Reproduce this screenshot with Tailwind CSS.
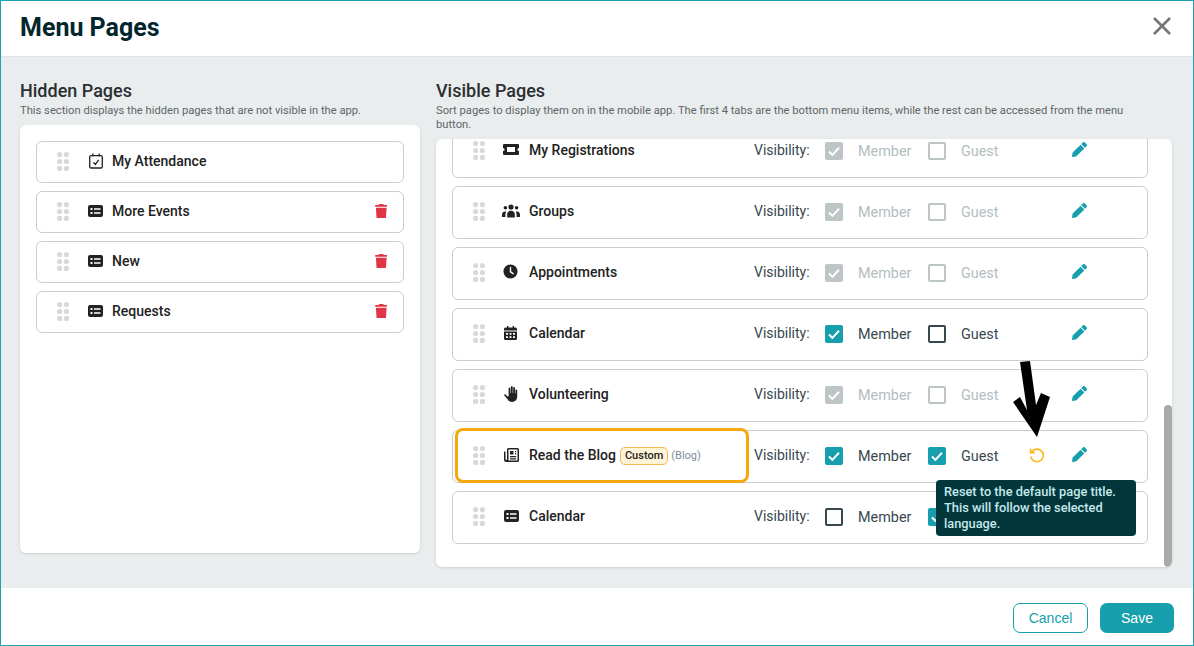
<!DOCTYPE html>
<html lang="en">
<head>
<meta charset="UTF-8">
<title>Menu Pages</title>
<script src="https://cdn.jsdelivr.net/npm/@tailwindcss/browser@4"></script>
</head>
<body class="bg-white font-['Roboto',sans-serif]">
<svg class="hidden">
  <symbol id="grip" viewBox="0 0 12 19"><g fill="#d9d9d9"><circle cx="2.6" cy="2.6" r="2.6"/><circle cx="9.4" cy="2.6" r="2.6"/><circle cx="2.6" cy="9.5" r="2.6"/><circle cx="9.4" cy="9.5" r="2.6"/><circle cx="2.6" cy="16.4" r="2.6"/><circle cx="9.4" cy="16.4" r="2.6"/></g></symbol>
  <symbol id="card" viewBox="0 0 15 12"><path fill="#222" fill-rule="evenodd" d="M2 0h11a2 2 0 0 1 2 2v8a2 2 0 0 1-2 2H2a2 2 0 0 1-2-2V2a2 2 0 0 1 2-2zM2.5 3v2h2V3zM2.5 7v2h2V7zM6 3.2v1.6h6.5V3.2zM6 7.2v1.6h6.5V7.2z"/></symbol>
  <symbol id="trash" viewBox="0 0 448 512"><path fill="#e03546" d="M135.2 17.7L128 32H32C14.3 32 0 46.3 0 64S14.3 96 32 96H416c17.7 0 32-14.3 32-32s-14.3-32-32-32H320l-7.2-14.3C307.4 6.8 296.3 0 284.2 0H163.8c-12.1 0-23.2 6.8-28.6 17.7zM416 128H32L53.2 467c1.6 25.3 22.6 45 47.9 45H346.9c25.3 0 46.3-19.7 47.9-45L416 128z"/></symbol>
  <symbol id="pencil" viewBox="0 0 512 512"><path fill="#179fae" d="M497.9 142.1l-46.1 46.1c-4.7 4.7-12.3 4.7-17 0l-111-111c-4.7-4.7-4.7-12.3 0-17l46.1-46.1c18.7-18.7 49.1-18.7 67.9 0l60.1 60.1c18.8 18.7 18.8 49.1 0 67.9zM284.2 99.8L21.6 362.4.4 483.9c-2.9 16.4 11.4 30.6 27.8 27.8l121.5-21.3 262.6-262.6c4.7-4.7 4.7-12.3 0-17l-111-111c-4.8-4.7-12.4-4.7-17.1 0z"/></symbol>
  <symbol id="attendance" viewBox="0 0 14 16"><path fill="none" stroke="#222" stroke-width="1.3" d="M2 2.6h10a1.3 1.3 0 0 1 1.3 1.3v9.8a1.3 1.3 0 0 1-1.3 1.3H2a1.3 1.3 0 0 1-1.3-1.3V3.9A1.3 1.3 0 0 1 2 2.6zM3.8 .5v3M10.2 .5v3M4.4 9.4l1.9 2 3.4-4.6"/></symbol>
  <symbol id="ticket" viewBox="0 0 16 11"><path fill="#222" fill-rule="evenodd" d="M1 0h14a1 1 0 0 1 1 1v2.900a1.600 1.600 0 0 0 0 3.200V10a1 1 0 0 1-1 1H1a1 1 0 0 1-1-1V7.100a1.600 1.600 0 0 0 0-3.200V1a1 1 0 0 1 1-1zM4 3v5h8V3z"/></symbol>
  <symbol id="groups" viewBox="0 0 18 14"><g fill="#222"><circle cx="9" cy="3" r="2.600"/><circle cx="3.400" cy="3.800" r="1.800"/><circle cx="14.600" cy="3.800" r="1.800"/><path d="M5.200 13.500v-3.300c0-2 1.500-3.400 3.800-3.400s3.800 1.400 3.800 3.400v3.300zM0 13v-2.200c0-2 1.200-3.400 2.800-3.400.6 0 1.100.1 1.500.4-.6.800-.9 1.800-.9 2.900V13zM18 13v-2.200c0-2-1.200-3.400-2.800-3.400-.6 0-1.100.1-1.500.4.600.8.900 1.800.900 2.900V13z"/></g></symbol>
  <symbol id="clock" viewBox="0 0 16 16"><circle cx="8" cy="8" r="7.500" fill="#222"/><path fill="none" stroke="#fff" stroke-width="1.500" stroke-linecap="round" d="M8 3.800V8.400l2.800 1.800"/></symbol>
  <symbol id="calendar" viewBox="0 0 13 14"><path fill="#222" fill-rule="evenodd" d="M3 0h1.400v1.500h4.200V0H10v1.500h1.500A1.500 1.500 0 0 1 13 3v1.500H0V3a1.500 1.500 0 0 1 1.500-1.500H3zM0 5.500h13v7A1.500 1.500 0 0 1 11.500 14h-10A1.500 1.500 0 0 1 0 12.500zM2 7v1.700h2V7zM5.500 7v1.700h2V7zM9 7v1.700h2V7zM2 10.300V12h2v-1.700zM5.500 10.300V12h2v-1.700zM9 10.300V12h2v-1.700z"/></symbol>
  <symbol id="hand" viewBox="0 0 14 16"><path fill="#222" d="M4.600 2.400a.9.900 0 0 1 1.800 0V7h.5V1a.9.900 0 0 1 1.800 0v6h.5V2a.9.900 0 0 1 1.800 0v5.600h.4V4.400a.9.900 0 0 1 1.800 0v6.400c0 3-2.200 5.200-5.100 5.200-2.200 0-3.600-1-4.600-2.700L.3 9.400c-.5-.9.800-1.700 1.500-.9l1.300 1.800c.4.500 1.500.3 1.500-.5z"/></symbol>
  <symbol id="news" viewBox="0 0 15 14"><path fill="#222" fill-rule="evenodd" d="M4.500 0h9A1.500 1.500 0 0 1 15 1.500v11a1.500 1.500 0 0 1-1.500 1.500h-11A2.500 2.500 0 0 1 0 11.500V3.500h1.500v8a1 1 0 0 0 1.500 0V1.500A1.500 1.500 0 0 1 4.500 0zM4.500 1.500v10.400q0 .3-.1.600h9.100v-11zM6 3h3.500v3.500H6zM11 3h1.200v1.300H11zM11 5.200h1.200v1.300H11zM6 8h6.200v1.300H6zM6 10.200h6.200v1.300H6z"/></symbol>
  <symbol id="check" viewBox="0 0 18 18"><path fill="none" stroke="#fff" stroke-width="2" d="M4 9.500l3.400 3.400L14 5.800"/></symbol>
</svg>

<div class="relative w-[1194px] h-[646px] border border-[#1ca3b3] flex flex-col overflow-hidden">
  <header class="h-[55px] shrink-0 bg-white flex items-center justify-between pl-[19px] pr-[21px] pb-[2px]">
    <h1 class="text-[25px] font-bold text-[#02262c]">Menu Pages</h1>
    <svg class="w-[20px] h-[20px] -mt-[3px]" viewBox="0 0 20 20"><path fill="none" stroke="#757575" stroke-width="2.600" d="M2 2l16 16M18 2L2 18"/></svg>
  </header>

  <main class="h-[532px] shrink-0 bg-[#e9edee] border-t border-[#e1e5e6] flex gap-[16px] pl-[19px] pr-[21px] pt-[22px]">
    <section class="w-[400px]">
      <h2 class="text-[18px] leading-[24px] mb-[1px] font-medium text-[#2b2f31]">Hidden Pages</h2>
      <p class="text-[11.200px] leading-[14px] text-[#5f6568] mb-[7px]">This section displays the hidden pages that are not visible in the app.</p>
      <div class="h-[428px] bg-white rounded-md shadow-sm px-[16px] pt-[16px] flex flex-col gap-[8px]">
        <div class="h-[42px] border border-[#cccccc] rounded-md flex items-center pl-[20px] pr-[16px]">
          <svg class="w-[12px] h-[19px] mr-[20px] -mt-[1px]"><use href="#grip"/></svg>
          <svg class="w-[14px] h-[16px] mr-[9px] -mt-[3px]"><use href="#attendance"/></svg>
          <span class="text-[14px] font-medium text-[#222] -mt-[2px]">My Attendance</span>
        </div>
        <div class="h-[42px] border border-[#cccccc] rounded-md flex items-center pl-[20px] pr-[16px]">
          <svg class="w-[12px] h-[19px] mr-[19px] -mt-[1px]"><use href="#grip"/></svg>
          <svg class="w-[15px] h-[12px] mr-[9px] -mt-[2px]"><use href="#card"/></svg>
          <span class="text-[14px] font-medium text-[#222] -mt-[2px]">More Events</span>
          <svg class="w-[12.500px] h-[14.500px] ml-auto -mt-[2px]"><use href="#trash"/></svg>
        </div>
        <div class="h-[42px] border border-[#cccccc] rounded-md flex items-center pl-[20px] pr-[16px]">
          <svg class="w-[12px] h-[19px] mr-[19px] -mt-[1px]"><use href="#grip"/></svg>
          <svg class="w-[15px] h-[12px] mr-[9px] -mt-[2px]"><use href="#card"/></svg>
          <span class="text-[14px] font-medium text-[#222] -mt-[2px]">New</span>
          <svg class="w-[12.500px] h-[14.500px] ml-auto -mt-[2px]"><use href="#trash"/></svg>
        </div>
        <div class="h-[42px] border border-[#cccccc] rounded-md flex items-center pl-[20px] pr-[16px]">
          <svg class="w-[12px] h-[19px] mr-[19px] -mt-[1px]"><use href="#grip"/></svg>
          <svg class="w-[15px] h-[12px] mr-[9px] -mt-[2px]"><use href="#card"/></svg>
          <span class="text-[14px] font-medium text-[#222] -mt-[2px]">Requests</span>
          <svg class="w-[12.500px] h-[14.500px] ml-auto -mt-[2px]"><use href="#trash"/></svg>
        </div>
      </div>
    </section>

    <section class="flex-1">
      <h2 class="text-[18px] leading-[24px] mb-[1px] font-medium text-[#2b2f31]">Visible Pages</h2>
      <p class="max-w-[700px] text-[11.200px] leading-[14px] text-[#5f6568] mb-[7px]">Sort pages to display them on in the mobile app. The first 4 tabs are the bottom menu items, while the rest can be accessed from the menu button.</p>
      <div class="relative h-[428px] bg-white rounded-md shadow-sm overflow-hidden pl-[16px] pr-[24px]">
        <div class="-mt-[14px] flex flex-col gap-[8px]">

          <div class="h-[53px] border border-[#cccccc] rounded-md flex items-start pt-[13px] text-[14px] leading-[22px]">
            <svg class="w-[12px] h-[19px] ml-[20px] mr-[18px] mt-[2px]"><use href="#grip"/></svg>
            <span class="w-[26px] h-[22px] flex items-center"><svg class="w-[16px] h-[11px] -mt-[1px]"><use href="#ticket"/></svg></span>
            <span class="w-[225px] font-medium text-[#222]">My Registrations</span>
            <span class="w-[71px] text-[#37474f]">Visibility:</span>
            <span class="w-[18px] h-[18px] mt-[3px] rounded-[2px] bg-[#bdc5c7]"><svg class="w-[18px] h-[18px]"><use href="#check"/></svg></span>
            <span class="w-[85px] pl-[15px] mt-[2px] text-[14.400px] text-[#b3bdbf]">Member</span>
            <span class="w-[18px] h-[18px] mt-[3px] rounded-[2px] border-2 border-[#bdc5c7]"></span>
            <span class="w-[126px] pl-[15px] mt-[2px] text-[14.400px] text-[#b3bdbf]">Guest</span>
            <svg class="w-[15px] h-[15px] mt-[3px]"><use href="#pencil"/></svg>
          </div>

          <div class="h-[53px] border border-[#cccccc] rounded-md flex items-start pt-[13px] text-[14px] leading-[22px]">
            <svg class="w-[12px] h-[19px] ml-[20px] mr-[18px] mt-[2px]"><use href="#grip"/></svg>
            <span class="w-[26px] h-[22px] flex items-center"><svg class="w-[18px] h-[14px] -ml-[1px] -mt-[1px]"><use href="#groups"/></svg></span>
            <span class="w-[225px] font-medium text-[#222]">Groups</span>
            <span class="w-[71px] text-[#37474f]">Visibility:</span>
            <span class="w-[18px] h-[18px] mt-[3px] rounded-[2px] bg-[#bdc5c7]"><svg class="w-[18px] h-[18px]"><use href="#check"/></svg></span>
            <span class="w-[85px] pl-[15px] mt-[2px] text-[14.400px] text-[#b3bdbf]">Member</span>
            <span class="w-[18px] h-[18px] mt-[3px] rounded-[2px] border-2 border-[#bdc5c7]"></span>
            <span class="w-[126px] pl-[15px] mt-[2px] text-[14.400px] text-[#b3bdbf]">Guest</span>
            <svg class="w-[15px] h-[15px] mt-[3px]"><use href="#pencil"/></svg>
          </div>

          <div class="h-[53px] border border-[#cccccc] rounded-md flex items-start pt-[13px] text-[14px] leading-[22px]">
            <svg class="w-[12px] h-[19px] ml-[20px] mr-[18px] mt-[2px]"><use href="#grip"/></svg>
            <span class="w-[26px] h-[22px] flex items-center"><svg class="w-[15px] h-[15px] -mt-[1px]"><use href="#clock"/></svg></span>
            <span class="w-[225px] font-medium text-[#222]">Appointments</span>
            <span class="w-[71px] text-[#37474f]">Visibility:</span>
            <span class="w-[18px] h-[18px] mt-[3px] rounded-[2px] bg-[#bdc5c7]"><svg class="w-[18px] h-[18px]"><use href="#check"/></svg></span>
            <span class="w-[85px] pl-[15px] mt-[2px] text-[14.400px] text-[#b3bdbf]">Member</span>
            <span class="w-[18px] h-[18px] mt-[3px] rounded-[2px] border-2 border-[#bdc5c7]"></span>
            <span class="w-[126px] pl-[15px] mt-[2px] text-[14.400px] text-[#b3bdbf]">Guest</span>
            <svg class="w-[15px] h-[15px] mt-[3px]"><use href="#pencil"/></svg>
          </div>

          <div class="h-[53px] border border-[#cccccc] rounded-md flex items-start pt-[13px] text-[14px] leading-[22px]">
            <svg class="w-[12px] h-[19px] ml-[20px] mr-[18px] mt-[2px]"><use href="#grip"/></svg>
            <span class="w-[26px] h-[22px] flex items-center"><svg class="w-[13px] h-[14px] ml-[1px] -mt-[1px]"><use href="#calendar"/></svg></span>
            <span class="w-[225px] font-medium text-[#222]">Calendar</span>
            <span class="w-[71px] text-[#37474f]">Visibility:</span>
            <span class="w-[18px] h-[18px] mt-[3px] rounded-[2px] bg-[#179fae]"><svg class="w-[18px] h-[18px]"><use href="#check"/></svg></span>
            <span class="w-[85px] pl-[15px] mt-[2px] text-[14.400px] text-[#37474f]">Member</span>
            <span class="w-[18px] h-[18px] mt-[3px] rounded-[2px] border-2 border-[#37474f]"></span>
            <span class="w-[126px] pl-[15px] mt-[2px] text-[14.400px] text-[#37474f]">Guest</span>
            <svg class="w-[15px] h-[15px] mt-[3px]"><use href="#pencil"/></svg>
          </div>

          <div class="h-[53px] border border-[#cccccc] rounded-md flex items-start pt-[13px] text-[14px] leading-[22px]">
            <svg class="w-[12px] h-[19px] ml-[20px] mr-[18px] mt-[2px]"><use href="#grip"/></svg>
            <span class="w-[26px] h-[22px] flex items-center"><svg class="w-[14px] h-[16px] ml-[1px] -mt-[1px]"><use href="#hand"/></svg></span>
            <span class="w-[225px] font-medium text-[#222]">Volunteering</span>
            <span class="w-[71px] text-[#37474f]">Visibility:</span>
            <span class="w-[18px] h-[18px] mt-[3px] rounded-[2px] bg-[#bdc5c7]"><svg class="w-[18px] h-[18px]"><use href="#check"/></svg></span>
            <span class="w-[85px] pl-[15px] mt-[2px] text-[14.400px] text-[#b3bdbf]">Member</span>
            <span class="w-[18px] h-[18px] mt-[3px] rounded-[2px] border-2 border-[#bdc5c7]"></span>
            <span class="w-[126px] pl-[15px] mt-[2px] text-[14.400px] text-[#b3bdbf]">Guest</span>
            <svg class="w-[15px] h-[15px] mt-[3px]"><use href="#pencil"/></svg>
          </div>

          <div class="relative h-[53px] border border-[#cccccc] rounded-md flex items-start pt-[13px] text-[14px] leading-[22px]">
            <svg class="w-[12px] h-[19px] ml-[20px] mr-[18px] mt-[2px]"><use href="#grip"/></svg>
            <span class="w-[26px] h-[22px] flex items-center"><svg class="w-[15px] h-[14px] ml-[1px] -mt-[1px]"><use href="#news"/></svg></span>
            <span class="w-[225px] h-[22px] flex items-center font-medium text-[#222]">Read the Blog
              <span class="ml-[4px] mt-[1px] h-[18px] px-[4px] flex items-center bg-[#fef3d6] border border-[#f5b95a] rounded-[5px] text-[11px] text-[#222]">Custom</span>
              <span class="ml-[3px] mt-[1px] leading-[18px] text-[11px] font-normal text-[#7f8c9a]">(Blog)</span>
            </span>
            <span class="w-[71px] text-[#37474f]">Visibility:</span>
            <span class="w-[18px] h-[18px] mt-[3px] rounded-[2px] bg-[#179fae]"><svg class="w-[18px] h-[18px]"><use href="#check"/></svg></span>
            <span class="w-[85px] pl-[15px] mt-[2px] text-[14.400px] text-[#37474f]">Member</span>
            <span class="w-[18px] h-[18px] mt-[3px] rounded-[2px] bg-[#179fae]"><svg class="w-[18px] h-[18px]"><use href="#check"/></svg></span>
            <span class="w-[83px] pl-[15px] mt-[2px] text-[14.400px] text-[#37474f]">Guest</span>
            <svg class="w-[16px] h-[16px] mt-[3px]" viewBox="0 0 16 16"><path fill="none" stroke="#fbb81e" stroke-width="1.600" d="M2.600 5.200A6.300 6.300 0 1 1 1.800 9.500M1.600 1.400v4.200h4.200"/></svg>
            <svg class="w-[15px] h-[15px] mt-[3px] ml-[27px]"><use href="#pencil"/></svg>
            <div class="absolute left-[2px] -top-[3px] w-[294px] h-[55px] border-[3px] border-[#f5a90f] rounded-[8px]"></div>
          </div>

          <div class="h-[53px] border border-[#cccccc] rounded-md flex items-start pt-[13px] text-[14px] leading-[22px]">
            <svg class="w-[12px] h-[19px] ml-[20px] mr-[18px] mt-[2px]"><use href="#grip"/></svg>
            <span class="w-[26px] h-[22px] flex items-center"><svg class="w-[15px] h-[12px] ml-[1px] -mt-[1px]"><use href="#card"/></svg></span>
            <span class="w-[225px] font-medium text-[#222]">Calendar</span>
            <span class="w-[71px] text-[#37474f]">Visibility:</span>
            <span class="w-[18px] h-[18px] mt-[3px] rounded-[2px] border-2 border-[#37474f]"></span>
            <span class="w-[85px] pl-[15px] mt-[2px] text-[14.400px] text-[#37474f]">Member</span>
            <span class="w-[18px] h-[18px] mt-[3px] rounded-[2px] bg-[#179fae]"><svg class="w-[18px] h-[18px]"><use href="#check"/></svg></span>
          </div>
        </div>
        <div class="absolute right-0 top-[266px] w-[8px] h-[162px] rounded-full bg-[#aaaaaa]"></div>
      </div>
    </section>
  </main>

  <footer class="flex-1 bg-white flex justify-end items-start gap-[12px] pt-[15px] pr-[19px] font-['Liberation_Sans',sans-serif] text-[14px]">
    <button class="w-[75px] h-[30px] rounded-[7px] border border-[#179fae] text-[#179fae]">Cancel</button>
    <button class="w-[74px] h-[30px] rounded-[7px] bg-[#179fae] text-white">Save</button>
  </footer>

  <div class="absolute left-[935px] top-[479px] w-[200px] h-[56px] rounded-[4px] bg-[#02363d] px-[8px] py-[4px] text-[12.800px] leading-[16px] font-medium text-[#c5e8ea]">Reset to the default page title. This will follow the selected language.</div>
  <svg class="absolute left-[1011px] top-[359px] w-[40px] h-[80px]" viewBox="1012 360 40 80"><polygon fill="#000" points="1020,362 1030,361 1036,405 1041,393 1050,397 1037,437 1013,402 1020,397 1027,410"/></svg>
</div>
</body>
</html>
